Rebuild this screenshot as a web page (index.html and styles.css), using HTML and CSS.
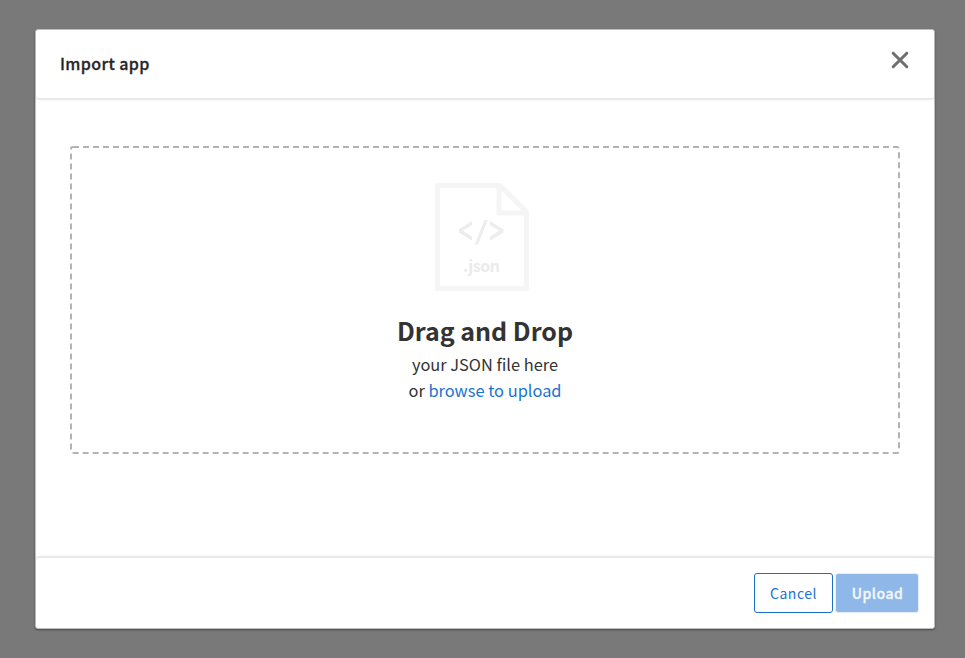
FILE: index.html
```html
<!DOCTYPE html>
<html lang="en">
<head>
<meta charset="utf-8">
<title>Import app</title>
<link rel="stylesheet" href="styles.css">
</head>
<body>
<div class="modal" role="dialog" aria-labelledby="title">
  <header class="modal-header">
    <h1 class="title" id="title">Import app</h1>
    <button class="close" aria-label="Close">
      <svg width="18" height="18" viewBox="0 0 18 18"><path d="M2.2 2.2 15.8 15.8M15.8 2.2 2.2 15.8"/></svg>
    </button>
  </header>
  <main class="modal-body">
    <div class="dropzone">
      <svg class="outline" width="830" height="308"><rect x="1" y="1" width="828" height="306" rx="2"/></svg>
      <svg class="file-icon" width="94" height="108" viewBox="0 0 94 108">
        <path class="sheet" d="M2.5 2.5H65L91.5 29V105.5H2.5ZM64 3V30H91.5"/>
        <path class="code" d="M37 38 V42L27.800 47.800 37 53.500V57.700L24 49.500V46.200ZM55 38V42L64.200 47.800 55 53.500V57.700L68.500 49.500V46.200ZM49.500 37H52.800L43 61.500H39.700Z"/>
        <text x="46.500" y="89" text-anchor="middle" textLength="37">.json</text>
      </svg>
      <h2 class="drop-title">Drag and Drop</h2>
      <p class="drop-text">your JSON file here</p>
      <p class="drop-text">or <a class="browse">browse to upload</a></p>
    </div>
  </main>
  <footer class="modal-footer">
    <button class="btn cancel">Cancel</button>
    <button class="btn upload" disabled>Upload</button>
  </footer>
</div>
</body>
</html>
```

FILE: styles.css
```css
* {
  box-sizing: border-box;
}

body {
  margin: 0;
  height: 658px;
  padding: 29px 30px 29px 35px;
  background: #797979;
  color: #333;
  font-family: "Noto Sans CJK SC", "Noto Sans", sans-serif;
  overflow: hidden;
}

.modal {
  display: flex;
  flex-direction: column;
  width: 900px;
  height: 600px;
  border: 1px solid #bfbfbf;
  border-radius: 3px;
  background: #fff;
  box-shadow: 0 1px 2px rgba(0, 0, 0, 0.4);
}

.modal-header {
  display: flex;
  justify-content: space-between;
  height: 68px;
  padding: 21px 25px 0 24px;
  border-radius: 3px;
  box-shadow: 0 2px 2px rgba(0, 0, 0, 0.1);
}

.title {
  margin: -1px 0 0;
  color: #262628;
  font-size: 16px;
  font-weight: 500;
  line-height: 26px;
  letter-spacing: 0.4px;
  -webkit-text-stroke: 0.3px #262628;
}

.close {
  display: block;
  width: 18px;
  height: 18px;
  padding: 0;
  border: 0;
  background: none;
}

.close svg {
  display: block;
  fill: none;
  stroke: #6e6e6e;
  stroke-width: 3;
  stroke-linecap: round;
}

.modal-body {
  flex: 1;
  padding: 48px 34px 0;
}

.dropzone {
  position: relative;
  display: flex;
  flex-direction: column;
  align-items: center;
  height: 308px;
  padding-top: 37px;
}

.outline {
  position: absolute;
  inset: 0;
  fill: none;
  stroke: #b3b3b3;
  stroke-width: 2;
  stroke-dasharray: 6 4;
}

.file-icon {
  display: block;
  margin: 0 6px 23px 0;
}

.sheet {
  fill: none;
  stroke: #f5f5f5;
  stroke-width: 5;
  stroke-linejoin: round;
}

.code {
  fill: #ededed;
}

.file-icon text {
  fill: #ebebeb;
  font-size: 16px;
  font-weight: 700;
}

.drop-title {
  margin: 0 0 5px;
  font-size: 25px;
  font-weight: 700;
  line-height: 32px;
}

.drop-text {
  margin: 0;
  font-size: 16.4px;
  line-height: 26px;
}

.browse {
  color: #1b73d0;
}

.modal-footer {
  display: flex;
  gap: 2px;
  justify-content: flex-end;
  align-items: flex-start;
  height: 70px;
  padding: 15px 15px 0;
  border-radius: 3px;
  box-shadow: 0 -2px 2px rgba(0, 0, 0, 0.1);
}

.btn {
  height: 40px;
  padding: 0;
  border-radius: 3px;
  font-family: inherit;
  font-size: 14px;
  line-height: 20px;
  letter-spacing: 0.5px;
}

.cancel {
  width: 79px;
  border: 1px solid #1b6fc6;
  background: #fff;
  color: #1b73d0;
}

.upload {
  width: 84px;
  padding-left: 1px;
  border: 1px solid #e4edf8;
  background: #8fb8e8;
  color: #f4f8fd;
  font-weight: 500;
  -webkit-text-stroke: 0.3px #f4f8fd;
}
```
